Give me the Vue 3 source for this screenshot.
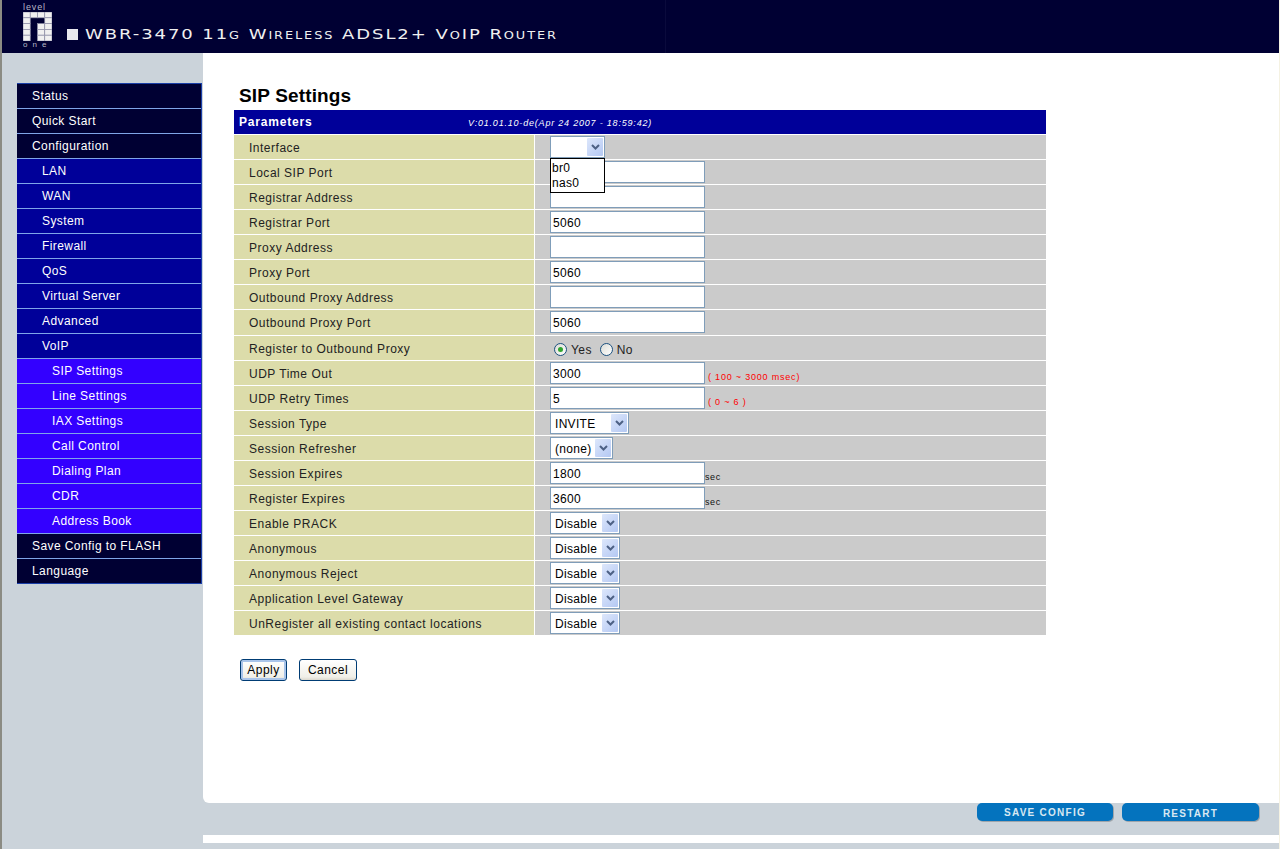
<template>
  <div class="page">
    <header class="top-bar">
      <div class="logo">
        <span class="logo-word">level</span>
        <svg class="logo-mark" width="29" height="29" viewBox="0 0 29 29">
          <rect
            v-for="cell in logoCells"
            :key="cell.key"
            :x="cell.x"
            :y="cell.y"
            width="7.25"
            height="5.8"
            fill="#f0f0f0"
            stroke="#8f90a8"
            stroke-width="0.7"
          />
        </svg>
        <span class="logo-word logo-word-low">one</span>
      </div>
      <div class="product">
        <span class="product-bullet"></span>
        <span class="product-name">WBR-3470 11g Wireless ADSL2+ VoIP Router</span>
      </div>
    </header>

    <div class="middle">
      <nav class="sidebar">
        <ul class="menu">
          <li v-for="item in menu" :key="item.label" :class="['menu-item', `level-${item.level}`]">{{ item.label }}</li>
        </ul>
      </nav>

      <main class="content">
        <h1 class="title">SIP Settings</h1>
        <div class="table">
          <div class="table-head">
            <span class="head-label">Parameters</span>
            <span class="head-version">V:01.01.10-de(Apr 24 2007 - 18:59:42)</span>
          </div>
          <div v-for="row in rows" :key="row.label" :class="['row', { 'row-tall': row.tall }]">
            <div class="row-label">{{ row.label }}</div>
            <div class="row-value">
              <template v-if="row.type === 'text'">
                <div class="text-field">{{ row.value }}</div>
                <span v-if="row.hint" class="hint">{{ row.hint }}</span>
                <span v-if="row.unit" class="unit">{{ row.unit }}</span>
              </template>
              <div v-else-if="row.type === 'select'" class="select" :style="{ width: row.width + 'px' }">
                <span class="select-text">{{ row.value }}</span>
                <span class="select-btn">
                  <svg width="9" height="6" viewBox="0 0 9 6"><path d="M1 1l3.5 3.5L8 1" fill="none" stroke="#4d6185" stroke-width="2" /></svg>
                </span>
              </div>
              <div v-else-if="row.type === 'radio'" class="radios">
                <span class="radio"><span class="radio-dot"></span></span>
                <span class="radio-text">Yes</span>
                <span class="radio"></span>
                <span class="radio-text">No</span>
              </div>
              <ul v-if="row.options" class="dropdown">
                <li v-for="opt in row.options" :key="opt">{{ opt }}</li>
              </ul>
            </div>
          </div>
        </div>
        <div class="actions">
          <button class="btn btn-focus">Apply</button>
          <button class="btn">Cancel</button>
        </div>
      </main>
    </div>

    <footer class="bottom-bar">
      <button class="pill pill-save">SAVE CONFIG</button>
      <button class="pill pill-restart">RESTART</button>
    </footer>
    <div class="bottom-strip"><div class="strip-white"></div></div>
  </div>
</template>

<script setup>
// 4 x 5 grid, the missing cells leave the dark "1" of the mark
const logoCells = []
for (let r = 0; r < 5; r++) {
  for (let c = 0; c < 4; c++) {
    const blank = (c === 1 && r >= 1) || (c === 2 && r === 1)
    if (!blank) logoCells.push({ key: `${r}-${c}`, x: c * 7.25, y: r * 5.8 })
  }
}

const menu = [
  { label: 'Status', level: 0 },
  { label: 'Quick Start', level: 0 },
  { label: 'Configuration', level: 0 },
  { label: 'LAN', level: 1 },
  { label: 'WAN', level: 1 },
  { label: 'System', level: 1 },
  { label: 'Firewall', level: 1 },
  { label: 'QoS', level: 1 },
  { label: 'Virtual Server', level: 1 },
  { label: 'Advanced', level: 1 },
  { label: 'VoIP', level: 1 },
  { label: 'SIP Settings', level: 2 },
  { label: 'Line Settings', level: 2 },
  { label: 'IAX Settings', level: 2 },
  { label: 'Call Control', level: 2 },
  { label: 'Dialing Plan', level: 2 },
  { label: 'CDR', level: 2 },
  { label: 'Address Book', level: 2 },
  { label: 'Save Config to FLASH', level: 0 },
  { label: 'Language', level: 0 }
]

const rows = [
  { label: 'Interface', type: 'select', value: '', width: 55, options: ['br0', 'nas0'] },
  { label: 'Local SIP Port', type: 'text', value: '' },
  { label: 'Registrar Address', type: 'text', value: '' },
  { label: 'Registrar Port', type: 'text', value: '5060' },
  { label: 'Proxy Address', type: 'text', value: '' },
  { label: 'Proxy Port', type: 'text', value: '5060' },
  { label: 'Outbound Proxy Address', type: 'text', value: '' },
  { label: 'Outbound Proxy Port', type: 'text', value: '5060', tall: true },
  { label: 'Register to Outbound Proxy', type: 'radio' },
  { label: 'UDP Time Out', type: 'text', value: '3000', hint: '( 100 ~ 3000 msec)' },
  { label: 'UDP Retry Times', type: 'text', value: '5', hint: '( 0 ~ 6 )' },
  { label: 'Session Type', type: 'select', value: 'INVITE', width: 79 },
  { label: 'Session Refresher', type: 'select', value: '(none)', width: 63 },
  { label: 'Session Expires', type: 'text', value: '1800', unit: 'sec' },
  { label: 'Register Expires', type: 'text', value: '3600', unit: 'sec' },
  { label: 'Enable PRACK', type: 'select', value: 'Disable', width: 70 },
  { label: 'Anonymous', type: 'select', value: 'Disable', width: 70 },
  { label: 'Anonymous Reject', type: 'select', value: 'Disable', width: 70 },
  { label: 'Application Level Gateway', type: 'select', value: 'Disable', width: 70 },
  { label: 'UnRegister all existing contact locations', type: 'select', value: 'Disable', width: 70 }
]
</script>

<style>
html, body {
  margin: 0;
  background: #fff;
  overflow: hidden;
}
</style>

<style scoped>
.page {
  width: 1280px;
  height: 849px;
  box-sizing: border-box;
  border-left: 2px solid #8b8b83;
  border-right: 1px solid #f5f2e2;
  display: flex;
  flex-direction: column;
  font-family: "Liberation Sans", Arial, sans-serif;
  font-size: 12px;
  background: #cbd3da;
  overflow: hidden;
}

.top-bar {
  height: 53px;
  flex: none;
  background: linear-gradient(to right, #000033 663px, #0a0a3c 663px, #0a0a3c 664px, #000033 664px);
  display: flex;
  align-items: flex-end;
  color: #eee;
}

.logo {
  width: 30px;
  margin-left: 21px;
  display: flex;
  flex-direction: column;
  height: 53px;
  overflow: hidden;
}

.logo-word {
  font-size: 9px;
  line-height: 8px;
  margin-top: 3px;
  letter-spacing: 0.9px;
  color: #b9b9c6;
}

.logo-word-low {
  margin-top: 1px;
  letter-spacing: 5px;
  font-size: 8px;
  line-height: 6px;
}

.logo-mark {
  flex: none;
  margin-top: 1px;
}

.product {
  display: flex;
  align-items: center;
  margin-left: 14px;
  margin-bottom: 12px;
  height: 14px;
}

.product-bullet {
  width: 11px;
  height: 11px;
  background: #e8e8ee;
  margin-right: 7px;
  flex: none;
}

.product-name {
  font-family: "DejaVu Sans", sans-serif;
  font-size: 14px;
  font-variant: small-caps;
  letter-spacing: 1.5px;
  white-space: nowrap;
  color: #f0f0f0;
  transform: scaleX(1.286);
  transform-origin: left center;
}

.middle {
  height: 750px;
  flex: none;
  display: flex;
}

.sidebar {
  width: 201px;
  flex: none;
  padding: 30px 0 0 15px;
  box-sizing: border-box;
}

.menu {
  list-style: none;
  margin: 0;
  padding: 0;
  border-top: 1px solid #1a3fa8;
  border-right: 1px solid #1a3fa8;
  border-bottom: 1px solid #1a3fa8;
  width: 185px;
  box-sizing: border-box;
}

.menu-item {
  height: 25px;
  box-sizing: border-box;
  line-height: 25px;
  color: #fff;
  letter-spacing: 0.42px;
  white-space: nowrap;
  border-bottom: 1px solid #7fa5e8;
}

.menu-item:last-child {
  border-bottom: none;
  height: 24px;
}

.level-0 {
  background: #000033;
  padding-left: 15px;
}

.level-1 {
  background: #000099;
  padding-left: 25px;
}

.level-2 {
  background: #3300ff;
  padding-left: 35px;
}

.content {
  flex: 1;
  background: #fff;
  border-bottom-left-radius: 6px;
  padding: 32px 0 0 31px;
  box-sizing: border-box;
}

.title {
  margin: 0 0 4px 5px;
  font-size: 19px;
  line-height: 21px;
  letter-spacing: 0.15px;
  font-weight: bold;
  color: #000;
}

.table {
  width: 812px;
}

.table-head {
  height: 25px;
  box-sizing: border-box;
  background: #000099;
  border-bottom: 1px solid #fff;
  color: #fff;
  display: flex;
  align-items: center;
  padding-left: 5px;
}

.head-label {
  width: 229px;
  flex: none;
  font-weight: bold;
  letter-spacing: 0.8px;
}

.head-version {
  font-size: 9px;
  font-style: italic;
  letter-spacing: 0.8px;
  padding-top: 2px;
  white-space: nowrap;
}

.row {
  height: 25px;
  box-sizing: border-box;
  display: flex;
  border-bottom: 1px solid #fff;
}

.row-tall {
  height: 26px;
}

.row:last-child {
  height: 24px;
  border-bottom: none;
}

.row-label {
  width: 300px;
  flex: none;
  background: #dcdcaa;
  padding-left: 15px;
  box-sizing: border-box;
  line-height: 26px;
  color: #222;
  letter-spacing: 0.51px;
  white-space: nowrap;
}

.row-value {
  flex: 1;
  margin-left: 1px;
  background: #cbcbcb;
  padding: 1px 0 0 15px;
  display: flex;
  align-items: flex-start;
  position: relative;
}

.text-field {
  width: 155px;
  height: 22px;
  flex: none;
  box-sizing: border-box;
  background: #fff;
  border: 1px solid #7f9db9;
  line-height: 22px;
  padding-left: 2px;
  color: #000;
  letter-spacing: 0.3px;
}

.hint {
  font-size: 9px;
  color: #f00;
  letter-spacing: 0.8px;
  margin-left: 3px;
  margin-top: 10px;
  line-height: 11px;
  white-space: nowrap;
}

.unit {
  font-size: 9px;
  letter-spacing: 0.6px;
  color: #111;
  margin-top: 9px;
  line-height: 12px;
}

.select {
  height: 22px;
  box-sizing: border-box;
  background: #fff;
  border: 1px solid #7f9db9;
  display: flex;
  align-items: center;
  justify-content: space-between;
  padding: 1px;
}

.select-text {
  padding: 2px 0 0 3px;
  letter-spacing: 0.3px;
  color: #000;
  white-space: nowrap;
}

.select-btn {
  width: 16px;
  height: 18px;
  flex: none;
  display: flex;
  align-items: center;
  justify-content: center;
  background: linear-gradient(135deg, #dde7fb, #b4c8f3);
  border-radius: 1px;
}

.radios {
  display: flex;
  align-items: center;
  height: 25px;
  margin-left: 4px;
}

.radio {
  width: 13px;
  height: 13px;
  box-sizing: border-box;
  border: 1px solid #1c5180;
  border-radius: 50%;
  background: linear-gradient(135deg, #dcdcd5, #fff);
  display: flex;
  align-items: center;
  justify-content: center;
}

.radio-dot {
  width: 5px;
  height: 5px;
  border-radius: 50%;
  background: #2fa52f;
}

.radio-text {
  margin: 0 8px 0 4px;
  letter-spacing: 0.4px;
  color: #222;
}

.dropdown {
  position: absolute;
  left: 15px;
  top: 23px;
  width: 55px;
  height: 35px;
  box-sizing: border-box;
  margin: 0;
  padding: 2px 0 0 1px;
  list-style: none;
  background: #fff;
  border: 1px solid #000;
  z-index: 5;
  line-height: 15px;
  letter-spacing: 0.3px;
}

.actions {
  display: flex;
  gap: 12px;
  margin: 24px 0 0 6px;
}

.btn {
  height: 22px;
  padding: 0;
  min-width: 58px;
  box-sizing: border-box;
  border: 1px solid #003c74;
  border-radius: 3px;
  background: linear-gradient(to bottom, #fff, #f0efe8 85%, #dcd8ce);
  font: 12px "Liberation Sans", Arial, sans-serif;
  letter-spacing: 0.45px;
  color: #000;
}

.btn-focus {
  min-width: 47px;
  box-shadow: inset 0 0 0 2px #a9c4ea;
}

.bottom-bar {
  height: 32px;
  flex: none;
  margin-left: 201px;
  display: flex;
  justify-content: flex-end;
  gap: 9px;
  padding-right: 20px;
  align-items: flex-start;
}

.pill {
  height: 18px;
  padding: 0;
  border: none;
  border-radius: 5px;
  background: #0473be;
  box-shadow: 1px 1px 0 #9fa5ab;
  color: #d9e8f2;
  font: bold 10px "Liberation Sans", Arial, sans-serif;
  letter-spacing: 1.25px;
}

.pill-save {
  width: 136px;
}

.pill-restart {
  width: 137px;
  padding-top: 2px;
}

.bottom-strip {
  flex: 1;
  padding-left: 201px;
}

.strip-white {
  height: 8px;
  background: #fff;
}
</style>
